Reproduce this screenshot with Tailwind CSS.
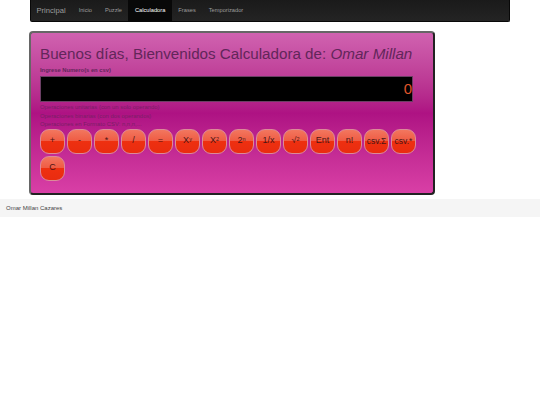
<!DOCTYPE html>
<html lang="es">
<head>
  <meta charset="UTF-8" />
  <title>Calculadora</title>
  <script src="https://cdn.jsdelivr.net/npm/@tailwindcss/browser@4"></script>
</head>
<body class="bg-white font-['Liberation_Sans',Arial,sans-serif] text-[#333]">
  <!-- Navbar -->
  <div class="px-[30px]">
    <nav class="flex items-stretch h-[22px] rounded-b-[2px] border border-t-0 border-[#080808] bg-gradient-to-b from-[#1a1a1a] to-[#242424]">
      <a class="flex items-center pl-[5.5px] pr-[6.5px] text-[7.6px] text-[#9d9d9d]">Principal</a>
      <a class="flex items-center px-[6.5px] text-[5.7px] text-[#9d9d9d]">Inicio</a>
      <a class="flex items-center px-[6.5px] text-[5.7px] text-[#9d9d9d]">Puzzle</a>
      <a class="flex items-center px-[6.5px] text-[5.7px] text-white bg-[#080808]">Calculadora</a>
      <a class="flex items-center px-[6.5px] text-[5.7px] text-[#9d9d9d]">Frases</a>
      <a class="flex items-center px-[6.5px] text-[5.7px] text-[#9d9d9d]">Temporizador</a>
    </nav>
  </div>

  <!-- Calculadora -->
  <main class="ml-[29px] mt-[9px] w-[406px] h-[164px] rounded-[4px] border-2 border-[#222] border-t-[#666] border-l-[#666] bg-gradient-to-b from-[#d062b0] via-[#ae1283] via-50% to-[#d93fa6] px-[9px] pt-[11px]">
    <h1 class="text-[15.2px] leading-[20px] text-[#62265a] whitespace-nowrap">Buenos días, Bienvenidos Calculadora de: <em>Omar Millan</em></h1>
    <label class="block mt-[2px] text-[5.8px] leading-[8px] font-bold text-[#62265a]">Ingrese Numero(s en csv)</label>
    <div class="mt-[2px] h-[26px] w-[373px] border border-[#6b3f64] bg-black flex items-center justify-end text-[15px] text-[#e0552a]">0</div>
    <p class="mt-[1px] text-[5.9px] leading-[8.5px] text-[#7a1f66]">Operaciones unitarias (con un solo operando)</p>
    <p class="text-[5.9px] leading-[8.5px] text-[#7a1f66]">Operaciones binarias (con dos operandos)</p>
    <p class="text-[5.9px] leading-[8.5px] text-[#7a1f66]">Operaciones en Formato CSV: n,n,n,...</p>
    <div class="flex flex-wrap gap-[2px] w-[385px]">
      <button class="w-[25px] h-[25px] rounded-[9px] border-[1.5px] border-[#dc8a98] bg-[linear-gradient(#f2775f,#ef5a42_50%,#ee3010_50%,#e92c10)] text-[9px] text-[#4a1515]">+</button>
      <button class="w-[25px] h-[25px] rounded-[9px] border-[1.5px] border-[#dc8a98] bg-[linear-gradient(#f2775f,#ef5a42_50%,#ee3010_50%,#e92c10)] text-[9px] text-[#4a1515]">-</button>
      <button class="w-[25px] h-[25px] rounded-[9px] border-[1.5px] border-[#dc8a98] bg-[linear-gradient(#f2775f,#ef5a42_50%,#ee3010_50%,#e92c10)] text-[9px] text-[#4a1515]">*</button>
      <button class="w-[25px] h-[25px] rounded-[9px] border-[1.5px] border-[#dc8a98] bg-[linear-gradient(#f2775f,#ef5a42_50%,#ee3010_50%,#e92c10)] text-[9px] text-[#4a1515]">/</button>
      <button class="w-[25px] h-[25px] rounded-[9px] border-[1.5px] border-[#dc8a98] bg-[linear-gradient(#f2775f,#ef5a42_50%,#ee3010_50%,#e92c10)] text-[9px] text-[#4a1515]">=</button>
      <button class="w-[25px] h-[25px] rounded-[9px] border-[1.5px] border-[#dc8a98] bg-[linear-gradient(#f2775f,#ef5a42_50%,#ee3010_50%,#e92c10)] text-[9px] text-[#4a1515]">X<sup class="text-[5.5px]">y</sup></button>
      <button class="w-[25px] h-[25px] rounded-[9px] border-[1.5px] border-[#dc8a98] bg-[linear-gradient(#f2775f,#ef5a42_50%,#ee3010_50%,#e92c10)] text-[9px] text-[#4a1515]">X<sup class="text-[5.5px]">2</sup></button>
      <button class="w-[25px] h-[25px] rounded-[9px] border-[1.5px] border-[#dc8a98] bg-[linear-gradient(#f2775f,#ef5a42_50%,#ee3010_50%,#e92c10)] text-[9px] text-[#4a1515]">2<sup class="text-[5.5px]">n</sup></button>
      <button class="w-[25px] h-[25px] rounded-[9px] border-[1.5px] border-[#dc8a98] bg-[linear-gradient(#f2775f,#ef5a42_50%,#ee3010_50%,#e92c10)] text-[9px] text-[#4a1515]">1/x</button>
      <button class="w-[25px] h-[25px] rounded-[9px] border-[1.5px] border-[#dc8a98] bg-[linear-gradient(#f2775f,#ef5a42_50%,#ee3010_50%,#e92c10)] text-[9px] text-[#4a1515]">√<sup class="text-[5.5px]">2</sup></button>
      <button class="w-[25px] h-[25px] rounded-[9px] border-[1.5px] border-[#dc8a98] bg-[linear-gradient(#f2775f,#ef5a42_50%,#ee3010_50%,#e92c10)] text-[9px] text-[#4a1515]">Ent</button>
      <button class="w-[25px] h-[25px] rounded-[9px] border-[1.5px] border-[#dc8a98] bg-[linear-gradient(#f2775f,#ef5a42_50%,#ee3010_50%,#e92c10)] text-[9px] text-[#4a1515]">n!</button>
      <button class="w-[25px] h-[25px] rounded-[9px] border-[1.5px] border-[#dc8a98] bg-[linear-gradient(#f2775f,#ef5a42_50%,#ee3010_50%,#e92c10)] text-[8.5px] text-[#4a1515] whitespace-nowrap">csv.Σ</button>
      <button class="w-[25px] h-[25px] rounded-[9px] border-[1.5px] border-[#dc8a98] bg-[linear-gradient(#f2775f,#ef5a42_50%,#ee3010_50%,#e92c10)] text-[8.5px] text-[#4a1515] whitespace-nowrap">csv.*</button>
      <button class="w-[25px] h-[25px] rounded-[9px] border-[1.5px] border-[#dc8a98] bg-[linear-gradient(#f2775f,#ef5a42_50%,#ee3010_50%,#e92c10)] text-[9px] text-[#4a1515]">C</button>
    </div>
  </main>

  <!-- Pie -->
  <footer class="mt-[4px] h-[18px] bg-[#f5f5f5] flex items-center pl-[6px] text-[6px] text-[#444]">Omar Millan Cazares</footer>
</body>
</html>
